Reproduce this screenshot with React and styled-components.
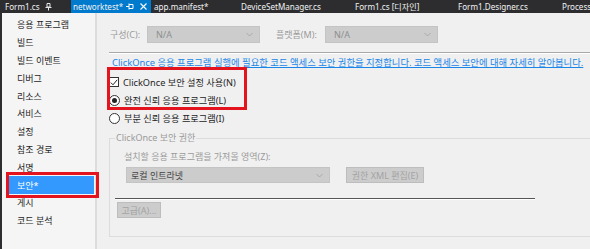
import React from 'react'
import styled, { createGlobalStyle } from 'styled-components'

const GlobalStyle = createGlobalStyle`
    html, body {
        margin: 0;
        padding: 0;
    }

    body {
        width: 590px;
        height: 249px;
        overflow: hidden;
        background: #f0f0f0;
        font-family: "Noto Sans", "Noto Sans CJK KR", sans-serif;
    }
`

const Window = styled.div`
    position: relative;
    width: 590px;
    height: 249px;
    display: flex;
    flex-direction: column;
    background: #f0f0f0;
    overflow: hidden;
`

const TabBar = styled.div`
    display: flex;
    height: 13px;
    flex-shrink: 0;
    padding-left: 2px;
    background: #2d2d30;
`

const Tab = styled.div`
    width: ${p => p.$width}px;
    flex-shrink: 0;
    box-sizing: border-box;
    display: flex;
    align-items: center;
    padding-left: ${p => p.$pad}px;
    background: ${p => p.$active ? '#007acc' : 'transparent'};
    color: #f1f1f1;
    font-size: 8.1px;
    line-height: 13px;
    white-space: nowrap;
`

const TabIcons = styled.span`
    display: flex;
    align-items: center;
    gap: 6px;
    margin-left: auto;
    margin-right: ${p => p.$right}px;
`

const Body = styled.div`
    display: flex;
    flex: 1;
    min-height: 0;
    border-left: 2px solid #2d2d30;
`

const Sidebar = styled.ul`
    width: 95px;
    flex-shrink: 0;
    margin: 0;
    padding: 3px 0 0;
    list-style: none;
    background: #f5f5f5;
    border-right: 2px solid #dcdcdc;
    box-sizing: border-box;
`

const SideItem = styled.li`
    height: 17.8px;
    margin: 0 1px 0 7px;
    padding-left: 8px;
    display: flex;
    align-items: center;
    font-size: 9px;
    color: ${p => p.$selected ? '#ffffff' : '#1e1e1e'};
    background: ${p => p.$selected ? '#3399ff' : 'transparent'};
`

const Content = styled.div`
    flex: 1;
    padding-left: 12px;
    display: flex;
    flex-direction: column;
    min-width: 0;
`

const ConfigRow = styled.div`
    display: flex;
    align-items: center;
    margin-top: 13px;
    height: 17px;
    padding-left: 1px;
`

const Label = styled.span`
    width: ${p => p.$width ? `${p.$width}px` : 'auto'};
    flex-shrink: 0;
    font-size: 9px;
    color: #9a9a9a;
    white-space: nowrap;
`

const Combo = styled.div`
    width: ${p => p.$width}px;
    height: ${p => p.$height || 17}px;
    flex-shrink: 0;
    box-sizing: border-box;
    display: flex;
    align-items: center;
    padding: 0 6px 0 ${p => p.$textPad || 8}px;
    background: #cccccc;
    border: 1px solid #c4c4c4;
    font-size: 9px;
    color: ${p => p.$dark ? '#444444' : '#8e8e8e'};
    white-space: nowrap;
`

const Chevron = styled.svg`
    margin-left: auto;
`

const Spacer = styled.span`
    width: ${p => p.$width}px;
    flex-shrink: 0;
`

const Separator = styled.div`
    margin-top: 9px;
    height: 1px;
    margin-right: -20px;
    background: #a9a9a9;
    border-bottom: 1px solid #ffffff;
`

const InfoLink = styled.a`
    margin-top: 3px;
    padding-left: 3px;
    height: 12px;
    line-height: 12px;
    font-size: 9.35px;
    color: #1a86e8;
    text-decoration: underline;
    white-space: nowrap;
`

const OptionRow = styled.label`
    display: flex;
    align-items: center;
    gap: 4px;
    height: 14px;
    margin-top: ${p => p.$top}px;
    font-size: 9.2px;
    color: #1e1e1e;
    white-space: nowrap;
`

const CheckBox = styled.span`
    width: 10px;
    height: 10px;
    box-sizing: border-box;
    border: 1px solid #333333;
    background: #ffffff;
    display: flex;
    align-items: center;
    justify-content: center;
`

const Radio = styled.span`
    width: 11px;
    height: 11px;
    box-sizing: border-box;
    border: 1px solid #333333;
    border-radius: 50%;
    background: #ffffff;
    display: flex;
    align-items: center;
    justify-content: center;

    &::after {
        content: '';
        width: 5px;
        height: 5px;
        border-radius: 50%;
        background: ${p => p.$checked ? '#222222' : 'transparent'};
    }
`

const GroupBox = styled.fieldset`
    margin: 7px -30px 0 0;
    padding: 0 0 18px 6px;
    border: 1px solid #dcdcdc;
    display: flex;
    flex-direction: column;
    min-width: 0;
`

const GroupTitle = styled.legend`
    margin-left: -1px;
    padding: 0 1px;
    font-size: 9px;
    line-height: 12px;
    color: #9a9a9a;
`

const ZoneLabel = styled(Label)`
    margin: 7px 0 0 8px;
    line-height: 12px;
`

const ZoneRow = styled.div`
    display: flex;
    align-items: center;
    margin: 4px 0 0 10px;
`

const Button = styled.div`
    width: ${p => p.$width}px;
    height: 16px;
    box-sizing: border-box;
    display: flex;
    align-items: center;
    justify-content: center;
    background: #cccccc;
    border: 1px solid #bdbdbd;
    font-size: 9px;
    color: #a3a3a3;
    white-space: nowrap;
`

const DarkRule = styled.div`
    width: 420px;
    height: 1px;
    margin: 15px 0 0 -1px;
    background: #555555;
    border-bottom: 1px solid #ffffff;
`

const AdvancedButton = styled(Button)`
    margin: 2px 0 0 1px;
`

const Callout = styled.div`
    position: absolute;
    left: ${p => p.$x}px;
    top: ${p => p.$y}px;
    width: ${p => p.$w}px;
    height: ${p => p.$h}px;
    box-sizing: border-box;
    border: 3px solid #e4141e;
    pointer-events: none;
`

const tabs = [
    { title: 'Form1.cs', width: 69, pad: 3, pinned: true },
    { title: 'networktest*', width: 80, pad: 2, active: true },
    { title: 'app.manifest*', width: 87, pad: 3 },
    { title: 'DeviceSetManager.cs', width: 114, pad: 3 },
    { title: 'Form1.cs [디자인]', width: 103, pad: 3 },
    { title: 'Form1.Designer.cs', width: 104, pad: 3 },
    { title: 'Process', width: 40, pad: 3 },
]

const sections = ['응용 프로그램', '빌드', '빌드 이벤트', '디버그', '리소스', '서비스', '설정', '참조 경로', '서명', '보안*', '게시', '코드 분석']

function ChevronIcon()
{
    return (
        <Chevron width="7" height="5" viewBox="0 0 7 5">
            <path d="M0.5 1 L3.5 4 L6.5 1" fill="none" stroke="#a5a5a5" strokeWidth="0.9" />
        </Chevron>
    )
}

function PinIcon()
{
    return (
        <svg width="7" height="8" viewBox="0 0 7 8">
            <path d="M2 0.5 H5 V4 H2 Z M0.5 4.5 H6.5 M3.5 4.5 V7.5" fill="none" stroke="#e8e8e8" strokeWidth="1" />
        </svg>
    )
}

function SidePinIcon()
{
    return (
        <svg width="8" height="7" viewBox="0 0 8 7">
            <path d="M0 3.5 H3 M3 0.5 V6.5 M3 1.5 H7 V5.5 H3" fill="none" stroke="#ffffff" strokeWidth="1" />
        </svg>
    )
}

function CloseIcon()
{
    return (
        <svg width="7" height="7" viewBox="0 0 7 7">
            <path d="M0.5 0.5 L6.5 6.5 M6.5 0.5 L0.5 6.5" stroke="#ffffff" strokeWidth="1.1" />
        </svg>
    )
}

export default function App()
{
    return (
        <>
            <GlobalStyle />
            <Window>
                <TabBar>
                    {tabs.map((tab) => (
                        <Tab key={tab.title} $width={tab.width} $pad={tab.pad} $active={tab.active}>
                            {tab.title}
                            {tab.pinned && <TabIcons $right={19}><PinIcon /></TabIcons>}
                            {tab.active && <TabIcons $right={4}><SidePinIcon /><CloseIcon /></TabIcons>}
                        </Tab>
                    ))}
                </TabBar>
                <Body>
                    <Sidebar>
                        {sections.map((name) => (
                            <SideItem key={name} $selected={name === '보안*'}>{name}</SideItem>
                        ))}
                    </Sidebar>
                    <Content>
                        <ConfigRow>
                            <Label $width={37}>구성(C):</Label>
                            <Combo $width={113}>N/A<ChevronIcon /></Combo>
                            <Spacer $width={16} />
                            <Label $width={49}>플랫폼(M):</Label>
                            <Combo $width={113}>N/A<ChevronIcon /></Combo>
                        </ConfigRow>
                        <Separator />
                        <InfoLink>ClickOnce 응용 프로그램 실행에 필요한 코드 액세스 보안 권한을 지정합니다. 코드 액세스 보안에 대해 자세히 알아봅니다.</InfoLink>
                        <OptionRow $top={6}>
                            <CheckBox>
                                <svg width="8" height="7" viewBox="0 0 8 7">
                                    <path d="M0.8 3.6 L3 5.8 L7.2 0.8" fill="none" stroke="#222222" strokeWidth="1" />
                                </svg>
                            </CheckBox>
                            ClickOnce 보안 설정 사용(N)
                        </OptionRow>
                        <OptionRow $top={4}>
                            <Radio $checked />
                            완전 신뢰 응용 프로그램(L)
                        </OptionRow>
                        <OptionRow $top={4}>
                            <Radio />
                            부분 신뢰 응용 프로그램(I)
                        </OptionRow>
                        <GroupBox>
                            <GroupTitle>ClickOnce 보안 권한</GroupTitle>
                            <ZoneLabel>설치할 응용 프로그램을 가져올 영역(Z):</ZoneLabel>
                            <ZoneRow>
                                <Combo $width={204} $height={16} $textPad={4} $dark>로컬 인트라넷<ChevronIcon /></Combo>
                                <Spacer $width={16} />
                                <Button $width={78}>권한 XML 편집(E)</Button>
                            </ZoneRow>
                            <DarkRule />
                            <AdvancedButton $width={44}>고급(A)...</AdvancedButton>
                        </GroupBox>
                    </Content>
                </Body>
                <Callout $x={6} $y={172} $w={93} $h={26} />
                <Callout $x={107} $y={67} $w={140} $h={43} />
            </Window>
        </>
    )
}
